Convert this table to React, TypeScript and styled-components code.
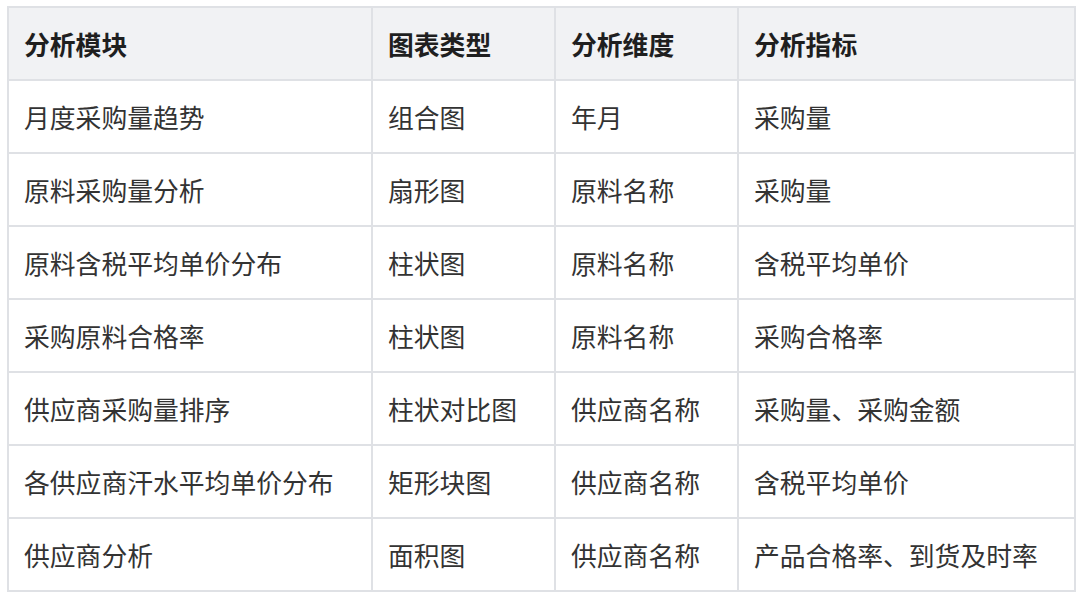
import React from 'react'
import styled, { createGlobalStyle } from 'styled-components'

const GlobalStyle = createGlobalStyle`
  html, body {
    margin: 0;
    padding: 0;
    background: #ffffff;
  }
  body {
    font-family: "Noto Sans CJK SC", "Noto Sans", sans-serif;
  }
`

const Page = styled.div`
  padding: 6px 6px 0 7px;
`

const Table = styled.table`
  border-collapse: collapse;
  width: 1067px;
  table-layout: fixed;
  font-size: 25.8px;
  color: #333333;
`

const HeadRow = styled.tr`
  background: #f1f2f4;
`

const HeadCell = styled.th`
  height: 71px;
  padding: 0 0 0 15px;
  border: 2px solid #dfe1e5;
  text-align: left;
  font-weight: 700;
  color: #1f1f1f;
  vertical-align: middle;
`

const Cell = styled.td`
  height: 71px;
  padding: 0 0 0 15px;
  border: 2px solid #dfe1e5;
  vertical-align: middle;
  white-space: nowrap;
`

const columns = [
  { title: '分析模块', width: 364 },
  { title: '图表类型', width: 183 },
  { title: '分析维度', width: 183 },
  { title: '分析指标', width: 337 },
]

const rows = [
  ['月度采购量趋势', '组合图', '年月', '采购量'],
  ['原料采购量分析', '扇形图', '原料名称', '采购量'],
  ['原料含税平均单价分布', '柱状图', '原料名称', '含税平均单价'],
  ['采购原料合格率', '柱状图', '原料名称', '采购合格率'],
  ['供应商采购量排序', '柱状对比图', '供应商名称', '采购量、采购金额'],
  ['各供应商汗水平均单价分布', '矩形块图', '供应商名称', '含税平均单价'],
  ['供应商分析', '面积图', '供应商名称', '产品合格率、到货及时率'],
]

export default function App() {
  return (
    <>
      <GlobalStyle />
      <Page>
        <Table>
          <colgroup>
            {columns.map((c) => (
              <col key={c.title} style={{ width: c.width }} />
            ))}
          </colgroup>
          <thead>
            <HeadRow>
              {columns.map((c) => (
                <HeadCell key={c.title}>{c.title}</HeadCell>
              ))}
            </HeadRow>
          </thead>
          <tbody>
            {rows.map((r, i) => (
              <tr key={i}>
                {r.map((v, j) => (
                  <Cell key={j}>{v}</Cell>
                ))}
              </tr>
            ))}
          </tbody>
        </Table>
      </Page>
    </>
  )
}
